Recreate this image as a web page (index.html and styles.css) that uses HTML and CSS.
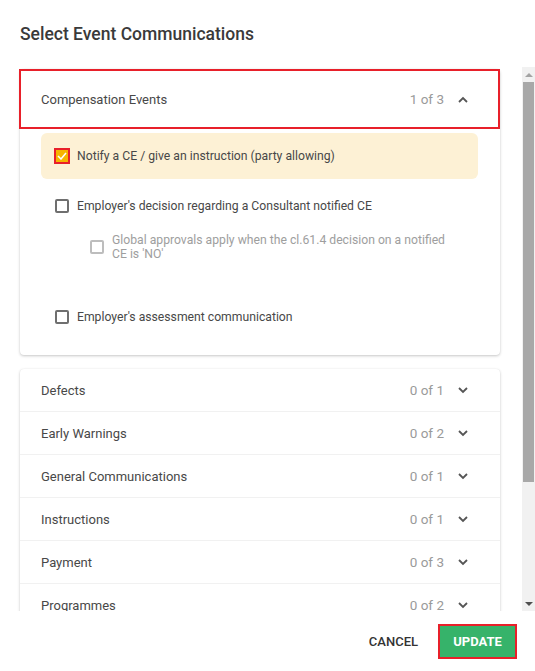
FILE: index.html
```html
<!DOCTYPE html>
<html>
<head>
<meta charset="utf-8">
<link rel="stylesheet" href="styles.css">
</head>
<body>
<div class="dialog">
  <h2 class="title">Select Event Communications</h2>
  <div class="scroll">
    <div class="content">
      <div class="card">
        <div class="panel-header active">
          <span class="panel-title">Compensation Events</span>
          <span class="count">1 of 3</span>
          <svg class="chev" width="10" height="7" viewBox="0 0 10 7"><path d="M1 6 L5 2 L9 6" fill="none" stroke="#555" stroke-width="1.8"/></svg>
        </div>
        <div class="panel-body">
          <div class="opt highlight">
            <span class="box checked"><svg width="10" height="8" viewBox="0 0 10 8"><path d="M1 4 L4 7 L9 1" fill="none" stroke="#fff" stroke-width="1.5"/></svg></span>
            <span class="label">Notify a CE / give an instruction (party allowing)</span>
          </div>
          <div class="opt row2">
            <span class="box"></span>
            <span class="label">Employer's decision regarding a Consultant notified CE</span>
          </div>
          <div class="opt sub">
            <span class="box disabled"></span>
            <span class="label muted">Global approvals apply when the cl.61.4 decision on a notified CE is 'NO'</span>
          </div>
          <div class="opt row3">
            <span class="box"></span>
            <span class="label">Employer's assessment communication</span>
          </div>
        </div>
      </div>
      <div class="card list">
        <div class="panel-header"><span class="panel-title">Defects</span><span class="count">0 of 1</span><svg class="chev" width="10" height="7" viewBox="0 0 10 7"><path d="M1 1 L5 5 L9 1" fill="none" stroke="#555" stroke-width="1.8"/></svg></div>
        <div class="panel-header"><span class="panel-title">Early Warnings</span><span class="count">0 of 2</span><svg class="chev" width="10" height="7" viewBox="0 0 10 7"><path d="M1 1 L5 5 L9 1" fill="none" stroke="#555" stroke-width="1.8"/></svg></div>
        <div class="panel-header"><span class="panel-title">General Communications</span><span class="count">0 of 1</span><svg class="chev" width="10" height="7" viewBox="0 0 10 7"><path d="M1 1 L5 5 L9 1" fill="none" stroke="#555" stroke-width="1.8"/></svg></div>
        <div class="panel-header"><span class="panel-title">Instructions</span><span class="count">0 of 1</span><svg class="chev" width="10" height="7" viewBox="0 0 10 7"><path d="M1 1 L5 5 L9 1" fill="none" stroke="#555" stroke-width="1.8"/></svg></div>
        <div class="panel-header"><span class="panel-title">Payment</span><span class="count">0 of 3</span><svg class="chev" width="10" height="7" viewBox="0 0 10 7"><path d="M1 1 L5 5 L9 1" fill="none" stroke="#555" stroke-width="1.8"/></svg></div>
        <div class="panel-header"><span class="panel-title">Programmes</span><span class="count">0 of 2</span><svg class="chev" width="10" height="7" viewBox="0 0 10 7"><path d="M1 1 L5 5 L9 1" fill="none" stroke="#555" stroke-width="1.8"/></svg></div>
      </div>
    </div>
    <div class="scrollbar">
      <div class="sb-btn"><span class="tri up"></span></div>
      <div class="sb-thumb"></div>
      <div class="sb-rest"></div>
      <div class="sb-btn"><span class="tri down"></span></div>
    </div>
  </div>
  <div class="footer">
    <button class="btn cancel">CANCEL</button>
    <button class="btn update">UPDATE</button>
  </div>
</div>
</body>
</html>
```

FILE: styles.css
```css
* { box-sizing: border-box; }
html, body { margin: 0; padding: 0; background: #fff; }
body {
  font-family: Roboto, "Liberation Sans", sans-serif;
  width: 535px;
  height: 671px;
  overflow: hidden;
  color: #333;
}
.dialog {
  display: flex;
  flex-direction: column;
  height: 671px;
}
.title {
  margin: 0;
  padding: 24px 20px 0;
  font-size: 17.5px;
  line-height: 20px;
  font-weight: 500;
  color: #3a3a3a;
  height: 67px;
}
.scroll {
  display: flex;
  height: 544px;
}
.content {
  flex: 1;
  overflow: hidden;
  padding: 2px 22px 0 20px;
}
.card {
  background: #fff;
  border-radius: 4px;
  box-shadow: 0 1px 3px rgba(0,0,0,0.22), 0 0 1px rgba(0,0,0,0.08);
}
.card.list { margin-top: 14px; }
.panel-header {
  display: flex;
  align-items: center;
  height: 43px;
  padding: 0 32px 0 21px;
  font-size: 13px;
  color: #484848;
  border-bottom: 1px solid #f1f1f1;
}
.panel-header.active {
  height: 60px;
  margin-left: -1px;
  border: 2px solid #e8202a;
  padding-left: 20px;
  padding-right: 30px;
}
.panel-title { flex: 1; }
.count {
  color: #9a9a9a;
  font-size: 13.5px;
  margin-right: 14px;
}
.chev { display: block; }
.panel-body {
  padding: 4px 22px 27px 21px;
}
.opt {
  display: flex;
  align-items: center;
  font-size: 12.2px;
  color: #484848;
}
.opt .label { margin-left: 8px; }
.highlight {
  height: 46px;
  background: #fdf1d5;
  border-radius: 6px;
  padding-left: 13px;
}
.row2 { height: 22px; margin-top: 16px; padding-left: 14px; }
.sub {
  margin-top: 16px;
  padding-left: 49px;
  padding-right: 20px;
  line-height: 14px;
}
.row3 { height: 22px; margin-top: 45px; padding-left: 14px; }
.box {
  flex: none;
  width: 14px;
  height: 14px;
  border: 2px solid #6f6f6f;
  border-radius: 2px;
  display: flex;
  align-items: center;
  justify-content: center;
}
.box.checked {
  width: 16px;
  height: 16px;
  border: 2px solid #e8202a;
  border-radius: 0;
  background: #f6b400;
}
.box.disabled {
  border-color: #bdbdbd;
}
.box.checked + .label { margin-left: 7px; }
.label.muted { color: #9e9e9e; }
.scrollbar {
  width: 13px;
  display: flex;
  flex-direction: column;
  background: #f1f1f1;
}
.sb-btn {
  height: 15px;
  display: flex;
  align-items: center;
  justify-content: center;
}
.tri {
  width: 0; height: 0;
  border-left: 4px solid transparent;
  border-right: 4px solid transparent;
}
.tri.up { border-bottom: 4px solid #a3a3a3; }
.tri.down { border-top: 4px solid #505050; }
.sb-thumb {
  height: 400px;
  margin: 0 1px;
  background: #a8a8a8;
}
.sb-rest { flex: 1; }
.footer {
  height: 60px;
  display: flex;
  justify-content: flex-end;
  align-items: center;
  padding-right: 18px;
}
.btn {
  font-family: Roboto, "Liberation Sans", sans-serif;
  font-size: 13px;
  font-weight: 500;
  border: none;
  background: none;
  cursor: pointer;
  padding: 0;
}
.cancel {
  color: #333;
  margin-right: 20px;
}
.update {
  width: 79px;
  height: 35px;
  color: #fff;
  font-weight: 700;
  background: #36b36a;
  border: 2px solid #e8202a;
}
```
